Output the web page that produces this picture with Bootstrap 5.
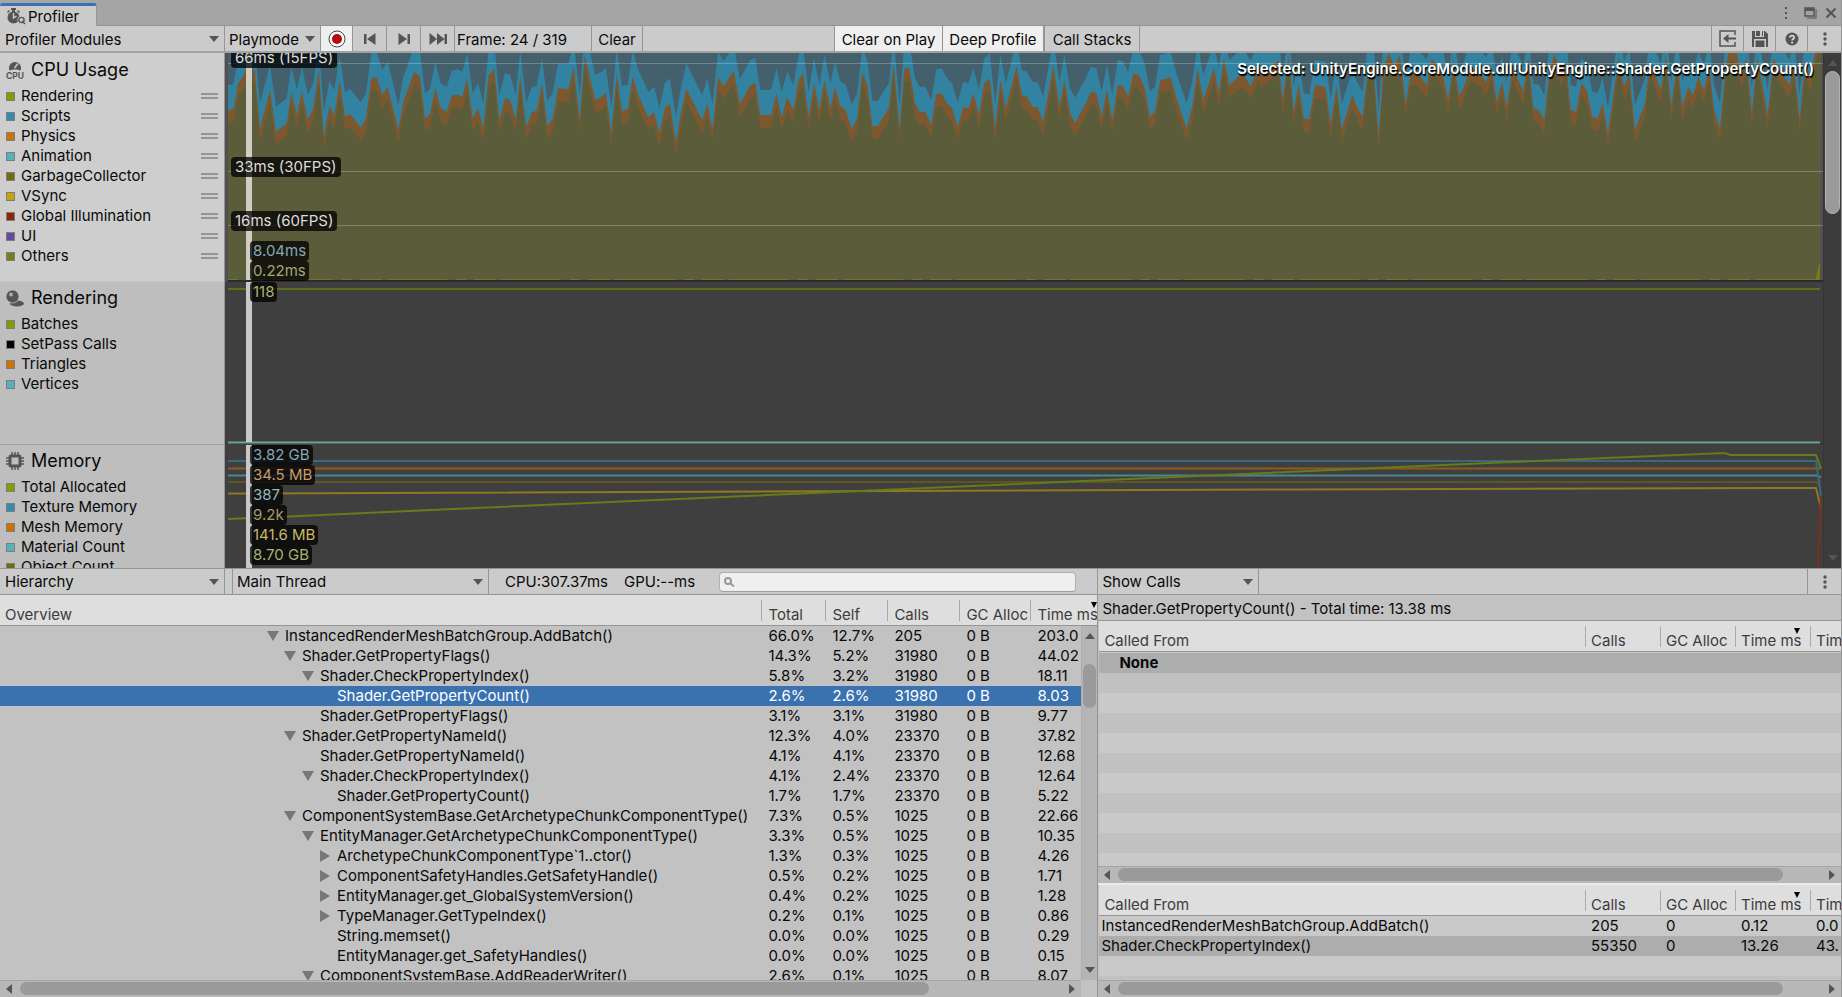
<!DOCTYPE html>
<html lang="en">
<head>
<meta charset="utf-8">
<meta name="viewport" content="width=device-width, initial-scale=1">
<title>Profiler</title>
<link href="https://cdn.jsdelivr.net/npm/bootstrap@5.3.0/dist/css/bootstrap.min.css" rel="stylesheet">
<script src="https://cdn.jsdelivr.net/npm/bootstrap@5.3.0/dist/js/bootstrap.bundle.min.js"></script>
<style>
  :root { --edge: #959595; --bar: #cbcbcb; --ink: #090909; --icon: #555; }
  body { font-family: Inter, "Liberation Sans", sans-serif; font-optical-sizing: none; font-size: 15px; line-height: 20px; color: var(--ink); background: #c2c2c2; }
  .window { display: grid; grid-template-rows: 26px 27px minmax(0, 515fr) minmax(0, 429fr); grid-template-columns: minmax(0, 1fr); height: 100vh; border-right: 1px solid var(--edge); overflow: hidden; }
  svg { display: block; flex: none; }

  .tab-strip { background: #a5a5a5; border-bottom: 1px solid var(--edge); }
  .tab-page { width: 97px; margin: 3px 0 -1px; padding: 1px 0 0 7px; border: 0; border-top: 3px solid #3a72b0; border-right: 1px solid var(--edge); border-radius: 3px 3px 0 0; background: var(--bar); color: var(--ink); gap: 2px; }
  .plain-btn { border: 0; padding: 0; background: none; color: var(--icon); }

  .tools { background: var(--bar); border-bottom: 1px solid var(--edge); }
  .tools.upper { border-bottom: 2px solid #a2a2a2; }
  .tool { display: flex; align-items: center; justify-content: center; border: 0; border-right: 1px solid var(--edge); background-color: transparent; color: var(--ink); padding: 2px 0 0; white-space: nowrap; border-radius: 0; }
  .tool.glyph { color: var(--icon); padding: 0; }
  .tool.on { background-color: #efefef; }
  .w-play { width: 96px; } .w-rec { width: 32px; } .w-step { width: 34px; } .w-frame { width: 137px; } .w-clear { width: 51px; }
  .tool.w-frame { justify-content: flex-start; padding-left: 2px; }
  .w-cop { width: 109px; border-left: 1px solid var(--edge); } .w-deep { width: 102px; border-right-width: 2px; } .w-calls { width: 95px; }
  .w-r { width: 32px; border-right: 0; border-left: 1px solid var(--edge); }
  .w-r:last-child { width: 34px; }
  select.tool { appearance: none; display: block; padding: 2px 20px 0 5px; outline: 0;
    background-image: url("data:image/svg+xml,%3Csvg xmlns='http://www.w3.org/2000/svg' width='10' height='6'%3E%3Cpath d='M0 0h10L5 6z' fill='%23555'/%3E%3C/svg%3E"); background-repeat: no-repeat; background-position: right 5px center; }
  .w-side { width: 225px; } .w-thread { width: 256px; } .w-show { width: 161px; }
  select.w-play, select.w-thread, select.w-show { padding-left: 4px; }

  .charts { display: grid; grid-template-rows: 228px 163px minmax(0, 1fr); grid-template-columns: minmax(0, 1fr); background: #3f3f3f; overflow: hidden; min-height: 0; }
  .module { min-height: 0; overflow: hidden; }
  .legend { width: 225px; flex: none; background: #bebebe; border-right: 1px solid var(--edge); overflow: hidden; }
  .module + .module .legend { border-top: 1px solid #a0a0a0; }
  .module.active + .module .legend { border-top-color: #c6c6c6; }
  .module.active .legend { background: #cecece; }
  .legend h2 { font-size: 18px; line-height: 32px; height: 33px; margin: 0; font-weight: 400; padding-left: 6px; gap: 7px; }
  .module + .module .legend h2 { height: 32px; }
  .legend li { height: 20px; padding: 0 6px; }
  .chip { width: 9px; height: 9px; border: 1px solid #7d7d7d; margin-right: 6px; flex: none; }
  .grip { width: 17px; height: 6px; border: solid #969696; border-width: 2px 0; margin-left: auto; }
  .plot { min-width: 0; border-left: 3px solid #505050; }
  .plot > svg { width: 100%; height: 100%; }
  .module + .module .plot { border-left-color: #3f3f3f; }
  .tag { position: absolute; background: rgba(0, 0, 0, .76); color: #dcdcdc; border-radius: 4px; padding: 0 4px; height: 20px; line-height: 20px; white-space: nowrap; }
  .fps { left: 3px; }
  .values { position: absolute; left: 22px; display: flex; flex-direction: column; align-items: flex-start; }
  .values .tag { position: static; padding: 0 3px; }
  .values.down { top: 1px; }
  .picked { position: absolute; top: 6px; right: 9px; color: #fff; font-weight: 600; text-shadow: 1px 2px 1px #000, 0 1px 1px #000; white-space: nowrap; }

  .vscroll { display: flex; flex-direction: column; align-items: center; width: 16px; background: #b5b5b5; border-left: 1px solid #adadad; color: var(--icon); }
  .vscroll.dark { width: 18px; background: #3b3b3b; border-color: #353535; flex: none; padding: 7px 0; color: #55554f; }
  .thumb { background: #9a9a9a; border-radius: 7px; }
  .dark .thumb { width: 15px; height: 143px; margin-top: 5px; border: 1px solid #b5b5b5; border-radius: 8px; }
  .hscroll { height: 17px; display: flex; align-items: center; background: #b8b8b8; border-top: 1px solid #a5a5a5; flex: none; color: var(--icon); padding: 0 6px 1px; }
  .hscroll .thumb { height: 13px; margin: 0 8px; }

  .details { border-top: 1px solid var(--edge); min-height: 0; }
  .details .tools { height: 26px; flex: none; }
  .details .tool { padding-top: 0; }
  .pane-left { flex: 1098 1 0; min-width: 0; }
  .pane-right { flex: 743 1 0; min-width: 0; border-left: 1px solid var(--edge); }
  .sheet { width: 100%; table-layout: fixed; border-collapse: separate; border-spacing: 0; }
  .sheet th { height: 31px; padding: 5px 0 4px; font-weight: 400; color: #3c3c3c; background: #dedede; border-bottom: 1px solid var(--edge); position: relative; }
  .sheet th > span { display: block; height: 21px; padding: 4px 0 0 6px; line-height: 17px; border-left: 1px solid #aaa; white-space: nowrap; }
  .sheet th > span { padding-top: 6px; }
  .sheet th:first-child > span { border: 0; padding-left: 5px; }
  .sheet td { height: 20px; padding: 0 0 0 7px; white-space: nowrap; overflow: hidden; }
  .sheet tr.picked-row td { background: #3a72b0; color: #fff; }
  .sort { position: absolute; top: 7px; right: 0; color: #000; }
  .callers .sort { right: 10px; }
  .tree td:first-child svg { margin-right: 6px; color: #777; width: 12px; }
  .lvl-0 { padding-left: 267px; } .lvl-1 { padding-left: 284px; } .lvl-2 { padding-left: 302px; } .lvl-3 { padding-left: 319px; }
  .tree-wrap .vscroll { position: absolute; top: 31px; right: 0; bottom: 0; padding: 7px 0; }
  .tree-wrap .thumb { width: 13px; height: 44px; margin-top: 25px; }
  .side-title { height: 26px; padding: 4px 0 0 4px; border-bottom: 1px solid var(--edge); flex: none; white-space: nowrap; }
  .callers { overflow: hidden; min-height: 0; background: repeating-linear-gradient(#c9c9c9 0 20px, #c1c1c1 20px 40px) 0 31px; margin-left: 1px; }
  .callers.first { background: repeating-linear-gradient(#c9c9c9 0 20px, #c1c1c1 20px 40px) 0 32px; flex: 0 1 245px; }
  .callers.first tbody td { height: 21px; padding-top: 1px; background: #adadad; background-clip: content-box; }
  .callers .sheet th > span { padding-left: 5px; }
  .callers td { padding-left: 6px; }
  .callers td:first-child { padding-left: 2px; }
  .callers.first td:first-child { padding-left: 0; }
  .dim td { background: #adadad; }
  .search { width: 357px; height: 20px; border: 1px solid #b0b0b0; border-bottom-color: #a0a0a0; border-radius: 4px; background: #efefef; padding: 0 6px 0 24px; outline: 0; }
  .search-box { margin-right: 21px; }
  .gap-cell { width: 8px; }
</style>
</head>
<body>
<main class="window">
  <header class="tab-strip d-flex">
    <button class="tab-page d-flex align-items-center">
      <svg width="19" height="17" viewBox="0 0 19 17"><g fill="#555"><circle cx="6.500" cy="9.500" r="6"/><path d="M4 0h5v2H8v2H5V2H4zM0 4l2-2 1 1-2 2zM11 2l2 2-1 1-2-2z"/></g><path d="M6.500 5v5l3-2" stroke="#cbcbcb" stroke-width="1.400" fill="none"/><circle cx="14.500" cy="12" r="4" fill="#cbcbcb"/><circle cx="14.500" cy="12" r="2.600" fill="none" stroke="#555" stroke-width="1.400"/><path d="M15 13l3 3" stroke="#555" stroke-width="1.400"/></svg>
      <span>Profiler</span>
    </button>
    <div class="ms-auto d-flex align-items-center">
      <button class="plain-btn me-3" aria-label="Menu"><svg width="4" height="14" viewBox="0 0 4 14" fill="currentColor"><path d="M1 1h2v2H1zM1 6h2v2H1zM1 11h2v2H1z"/></svg></button>
      <button class="plain-btn me-2" aria-label="Maximize"><svg width="13" height="12" viewBox="0 0 13 12"><path d="M1 1h9v8H1z" fill="none" stroke="currentColor" stroke-width="1.500"/><path d="M1 1h9v3H1zM11.500 2h1v9.500H3v-1h8.500z" fill="currentColor"/></svg></button>
      <button class="plain-btn me-1" aria-label="Close"><svg width="12" height="12" viewBox="0 0 12 12"><path d="M1.500 1.500l9 9M10.500 1.500l-9 9" stroke="currentColor" stroke-width="2"/></svg></button>
    </div>
  </header>

  <div class="tools upper d-flex">
    <select class="tool w-side" aria-label="Profiler Modules"><option>Profiler Modules</option></select>
    <select class="tool w-play" aria-label="Target"><option>Playmode</option></select>
    <button class="tool glyph on w-rec" aria-label="Record"><svg width="18" height="18" viewBox="0 0 18 18"><circle cx="9" cy="9" r="8" fill="#fff" stroke="#444"/><circle cx="9" cy="9" r="5" fill="#b40c0c"/></svg></button>
    <button class="tool glyph w-step" aria-label="Previous frame"><svg width="12" height="12" viewBox="0 0 12 12" fill="currentColor"><path d="M0 1h2.500v10H0zM11.500 0v12L3 6z"/></svg></button>
    <button class="tool glyph w-step" aria-label="Next frame"><svg width="12" height="12" viewBox="0 0 12 12" fill="currentColor"><path d="M9.500 1H12v10H9.500zM.5 0v12L9 6z"/></svg></button>
    <button class="tool glyph w-step" aria-label="Last frame"><svg width="18" height="12" viewBox="0 0 18 12" fill="currentColor"><path d="M15.500 1H18v10h-2.500zM.5 0v12L8 6zM8 0v12l7.500-6z"/></svg></button>
    <span class="tool w-frame">Frame: 24 / 319</span>
    <button class="tool w-clear">Clear</button>
    <div class="flex-grow-1" style="max-width:191px"></div>
    <button class="tool on w-cop" aria-pressed="true">Clear on Play</button>
    <button class="tool on w-deep" aria-pressed="true">Deep Profile</button>
    <button class="tool w-calls" aria-pressed="false">Call Stacks</button>
    <div class="ms-auto d-flex">
      <button class="tool glyph w-r" aria-label="Load"><svg width="17" height="17" viewBox="0 0 17 17"><path d="M16 5V1H1v15h15v-4" fill="none" stroke="currentColor" stroke-width="1.500"/><path d="M4 8.500L9.500 4v3.500H17v2H9.500V13z" fill="currentColor"/></svg></button>
      <button class="tool glyph w-r" aria-label="Save"><svg width="16" height="16" viewBox="0 0 16 16" fill="currentColor"><path d="M0 0h3v6h9V0h1l3 3v13h-2V8H2v8H0zM4 0h4v5H4zM10 0h1v5h-1zM3.500 9.500h9V16h-9z"/></svg></button>
      <button class="tool glyph w-r" aria-label="Help"><svg width="14" height="14" viewBox="0 0 14 14"><circle cx="7" cy="7" r="6.500" fill="currentColor"/><path d="M5 5.500C5 3 9.200 3 9.200 5.400 9.200 7 7.100 7 7.100 8.600" fill="none" stroke="#ddd" stroke-width="1.600"/><path d="M6.200 9.800h1.800v1.700H6.200z" fill="#ddd"/></svg></button>
      <button class="tool glyph w-r" aria-label="More"><svg width="4" height="14" viewBox="0 0 4 14" fill="currentColor"><circle cx="2" cy="2" r="1.700"/><circle cx="2" cy="7" r="1.700"/><circle cx="2" cy="12" r="1.700"/></svg></button>
    </div>
  </div>

  <div class="d-flex overflow-hidden">
    <section class="charts flex-grow-1">
      <article class="module active d-flex">
        <div class="legend">
          <h2 class="d-flex align-items-center"><svg width="18" height="19" viewBox="0 0 18 19"><path d="M3.500 10.500a6 6 0 1 1 11 0c-3-1.500-8-1.500-11 0z" fill="#555"/><path d="M8.500 8l3.500-4.500" stroke="#cecece" stroke-width="1.500"/><text x="9" y="18.500" text-anchor="middle" font-size="8.500" font-weight="700" fill="#555">CPU</text></svg>CPU Usage</h2>
          <ul class="list-unstyled m-0" data-items="Rendering:#7f9f00|Scripts:#318bb0|Physics:#cf7200|Animation:#57b1bd|GarbageCollector:#736c08|VSync:#c6a406|Global Illumination:#8f2407|UI:#65499a|Others:#7a7c1c" data-grip="1"></ul>
        </div>
        <div class="plot flex-grow-1 position-relative">
          <svg viewBox="228 53 1595 228" preserveAspectRatio="none" id="cpu">
            <rect x="228" y="53" width="1592" height="228" fill="#44606c"/>
            <rect x="1820" y="53" width="3" height="228" fill="#505050"/>
            <path id="a1" fill="#3283a2"/><path id="a2" fill="#7d582f"/><path id="a3" fill="#5b5c3a"/>
            <path d="M1815 280l5-19v19z" fill="#767a1e"/>
            <path d="M228 279.500H1820" stroke="#72752a" stroke-dasharray="10 8 22 5 60 9"/>
            <path d="M228 63.500H1823M228 171.500H1823M228 225.500H1823" stroke="#fff" stroke-opacity=".24"/>
            <path d="M228 280.500H1823" stroke="#2a2a2a"/>
            <rect x="246" y="53" width="6" height="227" fill="#d0cdc2"/>
          </svg>
          <span class="tag fps" style="top:-5px">66ms (15FPS)</span>
          <span class="tag fps" style="top:104px">33ms (30FPS)</span>
          <span class="tag fps" style="top:158px">16ms (60FPS)</span>
          <div class="values bottom-0"><span class="tag" style="color:#86a9b8">8.04ms</span><span class="tag" style="color:#a5a573">0.22ms</span></div>
          <div class="picked">Selected: UnityEngine.CoreModule.dll!UnityEngine::Shader.GetPropertyCount()</div>
        </div>
      </article>
      <article class="module d-flex">
        <div class="legend">
          <h2 class="d-flex align-items-center"><svg width="18" height="17" viewBox="0 0 18 17" fill="#555"><ellipse cx="11" cy="13.500" rx="7" ry="3"/><circle cx="6.500" cy="6.500" r="6.500" stroke="#bebebe" stroke-width=".8"/><circle cx="5" cy="4.500" r="2" fill="#aaa"/></svg>Rendering</h2>
          <ul class="list-unstyled m-0" data-items="Batches:#7f9f00|SetPass Calls:#000000|Triangles:#cf7200|Vertices:#57b1bd"></ul>
        </div>
        <div class="plot flex-grow-1 position-relative">
          <svg viewBox="228 281 1595 163" preserveAspectRatio="none">
            <path d="M228 281.500H1823" stroke="#2c2c2c"/>
            <path d="M228 289H1820" stroke="#5c6f1a" stroke-width="2"/>
            <path d="M228 443.500H1823" stroke="#2c2c2c"/>
            <path d="M228 442.500H1820" stroke="#70a592" stroke-width="2"/>
            <rect x="246" y="282" width="6" height="160" fill="#c8c8c8"/>
          </svg>
          <div class="values down"><span class="tag" style="color:#a9b56d">118</span></div>
        </div>
      </article>
      <article class="module d-flex">
        <div class="legend">
          <h2 class="d-flex align-items-center"><svg width="18" height="18" viewBox="0 0 18 18" stroke="#555" fill="none"><path d="M6 0v18M9 0v18M12 0v18M0 6h18M0 9h18M0 12h18" stroke-width="1.500"/><rect x="4" y="4" width="10" height="10" rx="1" stroke-width="3" fill="#bebebe"/></svg>Memory</h2>
          <ul class="list-unstyled m-0" data-items="Total Allocated:#7f9f00|Texture Memory:#318bb0|Mesh Memory:#cf7200|Material Count:#57b1bd|Object Count:#736c08"></ul>
        </div>
        <div class="plot flex-grow-1 position-relative">
          <svg viewBox="228 444 1595 124" preserveAspectRatio="none" fill="none" stroke-width="2">
            <path d="M228 493.500L1300 489.500 1816 488l5 20" stroke="#8f7a22"/>
            <path d="M228 482H1816l4 4" stroke="#5f5522"/>
            <path d="M228 475.500H1816l5 1.500" stroke="#50868f"/>
            <path d="M228 468.500H1820" stroke="#8f5a1e"/>
            <path d="M228 461H1816l5 35" stroke="#376a80"/>
            <path d="M1821 496l-3 72" stroke="#7a301c"/>
            <path d="M228 519L300 516 420 510.500 1500 462.500 1725 453l5 2H1816l5 14" stroke="#667b1a"/>
            <rect x="246" y="445" width="6" height="123" fill="#c8c8c8"/>
          </svg>
          <div class="values down">
            <span class="tag" style="color:#86a9b8">3.82 GB</span><span class="tag" style="color:#c99a68">34.5 MB</span><span class="tag" style="color:#94bcc0">387</span><span class="tag" style="color:#a39d6d">9.2k</span><span class="tag" style="color:#c8b964">141.6 MB</span><span class="tag" style="color:#a9b56d">8.70 GB</span>
          </div>
        </div>
      </article>
    </section>
    <div class="vscroll dark">
      <svg width="10" height="6" viewBox="0 0 10 6" fill="currentColor"><path d="M0 6h10L5 0z"/></svg>
      <div class="thumb"></div>
      <svg class="mt-auto" width="10" height="6" viewBox="0 0 10 6" fill="currentColor"><path d="M0 0h10L5 6z"/></svg>
    </div>
  </div>

  <div class="details d-flex">
    <section class="pane-left d-flex flex-column">
      <div class="tools d-flex text-nowrap">
        <select class="tool w-side" aria-label="View"><option>Hierarchy</option></select>
        <span class="tool gap-cell"></span>
        <select class="tool w-thread" aria-label="Thread"><option>Main Thread</option></select>
        <span class="ms-3 d-flex align-items-center">CPU:307.37ms</span>
        <span class="ms-3 d-flex align-items-center">GPU:--ms</span>
        <div class="search-box position-relative ms-auto d-flex align-items-center">
          <svg class="position-absolute start-0 ms-1" width="12" height="10" viewBox="0 0 12 10" fill="none" stroke="#999" stroke-width="2"><circle cx="5" cy="4" r="3"/><path d="M7 6l4 3.500"/></svg>
          <input class="search" id="find" type="text" aria-label="Search">
        </div>
      </div>
      <div class="tree-wrap flex-grow-1 position-relative overflow-hidden">
        <table class="sheet tree">
          <colgroup><col><col style="width:64px"><col style="width:62px"><col style="width:72px"><col style="width:71px"><col style="width:67px"></colgroup>
          <thead><tr><th><span>Overview</span></th><th><span>Total</span></th><th><span>Self</span></th><th><span>Calls</span></th><th><span>GC Alloc</span></th><th><span>Time ms</span><svg class="sort" width="6" height="6" viewBox="0 0 6 6"><path d="M0 0h6L3 6z"/></svg></th></tr></thead>
          <tbody id="rows"></tbody>
        </table>
        <div class="vscroll">
          <svg width="10" height="6" viewBox="0 0 10 6" fill="currentColor"><path d="M0 6h10L5 0z"/></svg>
          <div class="thumb"></div>
          <svg class="mt-auto" width="10" height="6" viewBox="0 0 10 6" fill="currentColor"><path d="M0 0h10L5 6z"/></svg>
        </div>
      </div>
      <div class="hscroll me-3">
        <svg width="6" height="10" viewBox="0 0 6 10" fill="currentColor"><path d="M6 0v10L0 5z"/></svg>
        <div class="thumb" style="width:85%"></div>
        <svg class="ms-auto" width="6" height="10" viewBox="0 0 6 10" fill="currentColor"><path d="M0 0v10l6-5z"/></svg>
      </div>
    </section>

    <section class="pane-right d-flex flex-column overflow-hidden">
      <div class="tools d-flex">
        <select class="tool w-show" aria-label="Details"><option>Show Calls</option></select>
        <button class="tool glyph w-r ms-auto" aria-label="More"><svg width="4" height="14" viewBox="0 0 4 14" fill="currentColor"><circle cx="2" cy="2" r="1.700"/><circle cx="2" cy="7" r="1.700"/><circle cx="2" cy="12" r="1.700"/></svg></button>
      </div>
      <div class="side-title">Shader.GetPropertyCount() - Total time: 13.38 ms</div>
      <div class="callers first">
        <table class="sheet">
          <colgroup><col><col style="width:75px"><col style="width:75px"><col style="width:75px"><col style="width:31px"></colgroup>
          <thead><tr><th><span>Called From</span></th><th><span>Calls</span></th><th><span>GC Alloc</span></th><th><span>Time ms</span><svg class="sort" width="6" height="6" viewBox="0 0 6 6"><path d="M0 0h6L3 6z"/></svg></th><th class="overflow-hidden"><span>Time %</span></th></tr></thead>
          <tbody><tr><td colspan="5"><span class="ps-3 ms-1 fw-bold">None</span></td></tr></tbody>
        </table>
      </div>
      <div class="hscroll">
        <svg width="6" height="10" viewBox="0 0 6 10" fill="currentColor"><path d="M6 0v10L0 5z"/></svg>
        <div class="thumb" style="width:91%"></div>
        <svg class="ms-auto" width="6" height="10" viewBox="0 0 6 10" fill="currentColor"><path d="M0 0v10l6-5z"/></svg>
      </div>
      <div class="border-top border-2 border-secondary-subtle flex-shrink-0"></div>
      <div class="callers flex-grow-1">
        <table class="sheet">
          <colgroup><col><col style="width:75px"><col style="width:75px"><col style="width:75px"><col style="width:31px"></colgroup>
          <thead><tr><th><span>Called From</span></th><th><span>Calls</span></th><th><span>GC Alloc</span></th><th><span>Time ms</span><svg class="sort" width="6" height="6" viewBox="0 0 6 6"><path d="M0 0h6L3 6z"/></svg></th><th class="overflow-hidden"><span>Time %</span></th></tr></thead>
          <tbody>
            <tr><td>InstancedRenderMeshBatchGroup.AddBatch()</td><td>205</td><td>0</td><td>0.12</td><td>0.0</td></tr>
            <tr class="dim"><td>Shader.CheckPropertyIndex()</td><td>55350</td><td>0</td><td>13.26</td><td>43.</td></tr>
          </tbody>
        </table>
      </div>
      <div class="hscroll">
        <svg width="6" height="10" viewBox="0 0 6 10" fill="currentColor"><path d="M6 0v10L0 5z"/></svg>
        <div class="thumb" style="width:91%"></div>
        <svg class="ms-auto" width="6" height="10" viewBox="0 0 6 10" fill="currentColor"><path d="M0 0v10l6-5z"/></svg>
      </div>
    </section>
  </div>
</main>
<script>
  // Legends
  document.querySelectorAll('[data-items]').forEach(ul => {
    ul.innerHTML = ul.dataset.items.split('|').map(s => {
      const [name, colour] = s.split(':');
      return `<li class="d-flex align-items-center"><span class="chip" style="background:${colour}"></span><span>${name}</span>${ul.dataset.grip ? '<span class="grip"></span>' : ''}</li>`;
    }).join('');
  });

  // Call tree: level, arrow (d = open, r = closed, - = leaf), name, total, self, calls, time
  const tree = [
    [0,'d','InstancedRenderMeshBatchGroup.AddBatch()','66.0%','12.7%','205','203.0'],
    [1,'d','Shader.GetPropertyFlags()','14.3%','5.2%','31980','44.02'],
    [2,'d','Shader.CheckPropertyIndex()','5.8%','3.2%','31980','18.11'],
    [3,'-','Shader.GetPropertyCount()','2.6%','2.6%','31980','8.03'],
    [2,'-','Shader.GetPropertyFlags()','3.1%','3.1%','31980','9.77'],
    [1,'d','Shader.GetPropertyNameId()','12.3%','4.0%','23370','37.82'],
    [2,'-','Shader.GetPropertyNameId()','4.1%','4.1%','23370','12.68'],
    [2,'d','Shader.CheckPropertyIndex()','4.1%','2.4%','23370','12.64'],
    [3,'-','Shader.GetPropertyCount()','1.7%','1.7%','23370','5.22'],
    [1,'d','ComponentSystemBase.GetArchetypeChunkComponentType()','7.3%','0.5%','1025','22.66'],
    [2,'d','EntityManager.GetArchetypeChunkComponentType()','3.3%','0.5%','1025','10.35'],
    [3,'r','ArchetypeChunkComponentType`1..ctor()','1.3%','0.3%','1025','4.26'],
    [3,'r','ComponentSafetyHandles.GetSafetyHandle()','0.5%','0.2%','1025','1.71'],
    [3,'r','EntityManager.get_GlobalSystemVersion()','0.4%','0.2%','1025','1.28'],
    [3,'r','TypeManager.GetTypeIndex()','0.2%','0.1%','1025','0.86'],
    [3,'-','String.memset()','0.0%','0.0%','1025','0.29'],
    [3,'-','EntityManager.get_SafetyHandles()','0.0%','0.0%','1025','0.15'],
    [2,'d','ComponentSystemBase.AddReaderWriter()','2.6%','0.1%','1025','8.07']
  ];
  const arrows = { d: 'M0 1h12L6 11z', r: 'M1 0v12l10-6z', '-': '' };
  document.getElementById('rows').innerHTML = tree.map((r, i) =>
    `<tr${i === 3 ? ' class="picked-row"' : ''}><td class="p-0"><div class="d-flex align-items-center lvl-${r[0]}"><svg width="12" height="12" viewBox="0 0 12 12" fill="currentColor"><path d="${arrows[r[1]]}"/></svg><span>${r[2]}</span></div></td><td>${r[3]}</td><td>${r[4]}</td><td>${r[5]}</td><td>0 B</td><td>${r[6]}</td></tr>`).join('');

  // Script time per frame, in runs: x origin, y origin, x scale, y scale, points
  const runs = [
    [220,40,3,3,'24,210 40,208 55,128 70,110 78,80 104,90 120,265 150,150 168,275 200,250 214,155 231,225 246,153 263,240 280,205 296,90 312,290 328,198 343,225 359,122 375,230 391,222 422,262 438,235 454,115 470,112 487,165 503,140 519,205 535,270 550,185 583,95 600,110 615,235 630,222 646,142 662,205 680,215 695,168 711,163 727,170 742,115 758,235 774,205 790,265 806,105 823,88 838,240 855,175 870,180 887,238 901,108 919,262 935,217 950,212 966,130 982,258 998,235 1014,145 1045,148 1061,80 1079,240 1094,45 1126,180 1142,172 1158,158 1174,280 1190,100'],
    [620,0,2.529,3,'5,333 20,328 32,228 46,285 72,352 86,335 100,400 113,325 126,310 141,425 154,340 168,265 194,328 208,360 221,310 234,388 248,230 262,258 288,212 303,312 330,255 342,248 355,345 382,345 396,280 409,352 423,290 438,330 452,240 463,218 477,350 491,250 504,330 517,240 532,325 544,260 557,318 571,330 586,388 600,355 613,215 626,258 638,378 652,378 665,352 680,325 692,190 707,388 719,205 732,205 746,310 758,335 772,335 787,375 800,282 813,280 827,310 840,325 854,382 868,320 881,325 894,280 908,345 921,250 935,235 949,388 962,240 976,325 1003,198 1016,285 1029,290 1043,320 1056,322 1070,365 1096,195 1111,320 1124,240 1138,340 1151,368 1178,310 1191,275 1205,280 1218,350 1232,268 1245,360 1259,255 1272,258 1285,290 1299,220 1312,225 1327,265 1340,350 1353,335 1366,240 1393,232 1406,290 1433,385 1447,320 1461,205 1475,300'],
    [1210,40,3,3,'12,85 26,160 42,55 58,135 90,105 105,110 122,138 145,80 155,105 205,60 218,180 236,45 251,215 266,130 281,235 298,238 315,135 346,140 362,252 380,135 395,268 427,165 443,205 458,230 474,80 490,75 506,288 520,80 538,40 553,80 570,45 587,190 602,100 618,95 650,135 666,55 698,105 715,180 731,60 747,168 762,140 780,80 812,100 828,128 845,80 860,185 876,125 890,200 908,80 940,155 955,50 970,205 987,210 1003,240 1018,95 1034,40 1052,100 1068,65 1082,210 1098,215 1114,130 1130,150 1147,230 1163,235 1178,190 1194,280 1226,50 1242,140 1258,100'],
    [1450,0,3,3,'555,390 585,310 600,180 632,270 648,165 664,320 682,180 697,320 715,260 730,285 745,230 762,270 778,200 792,330 810,385 828,190 842,140 858,150 875,225 890,170 905,340 922,170 953,345 970,175 1018,255 1032,195 1049,360 1065,180 1082,240 1097,140 1112,110']
  ];
  const pts = runs.flatMap(([x, y, sx, sy, s]) => s.split(' ').map(p => {
    const [a, b] = p.split(',').map(Number);
    return [x + a / sx, y + b / sy];
  }));
  const area = dy => 'M228 281L' + pts.map(([x, y]) => `${x.toFixed(1)} ${(y + dy).toFixed(1)}`).join('L') + 'L1820 281z';
  document.getElementById('a1').setAttribute('d', area(-25));
  document.getElementById('a2').setAttribute('d', area(0));
  document.getElementById('a3').setAttribute('d', area(13));
</script>
</body>
</html>
